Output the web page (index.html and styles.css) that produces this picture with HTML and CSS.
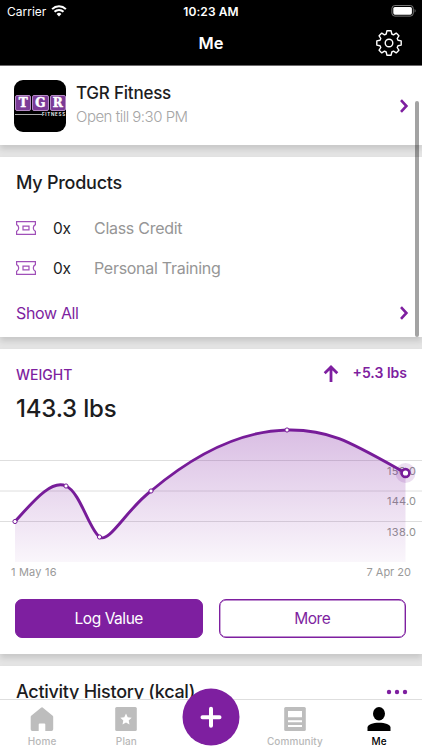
FILE: index.html
```html
<!DOCTYPE html>
<html lang="en">
<head>
<meta charset="utf-8">
<title>Me</title>
<link rel="stylesheet" href="styles.css">
</head>
<body>
<div class="phone">
  <header class="top">
    <div class="status">
      <div class="carrier"><span class="t-carrier">Carrier</span>
        <svg width="16" height="12" viewBox="0 0 16 12"><path d="M8 11.4 5.6 8.9a3.5 3.5 0 0 1 4.8 0z" fill="#fff"/><path d="M3.5 6.8a6.4 6.4 0 0 1 9 0M1.1 4.1a9.9 9.9 0 0 1 13.8 0" fill="none" stroke="#fff" stroke-width="2"/></svg>
      </div>
      <span class="t-clock">10:23 AM</span>
      <svg class="battery" width="26" height="12" viewBox="0 0 26 12"><rect x=".9" y=".5" width="21.4" height="10.6" rx="3" fill="none" stroke="#777"/><rect x="2.3" y="1.9" width="18.6" height="7.8" rx="1.6" fill="#fff"/><path d="M23.6 4v3.6c1.3-.5 1.3-3.1 0-3.6z" fill="#777"/></svg>
    </div>
    <div class="nav">
      <h1 class="t-title">Me</h1>
      <svg class="gear" width="28" height="28" viewBox="-14 -14 28 28" fill="none" stroke="#fff" stroke-width="1.4" stroke-linejoin="round"><path d="M-2.8-9-2.1-12.2H2.1L2.8-9 4.5-8.2 7.2-9.9 9.9-7.2 8.2-4.5 9-2.8 12.2-2.1V2.1L9 2.8 8.2 4.5 9.9 7.2 7.2 9.9 4.5 8.2 2.8 9 2.1 12.2H-2.1L-2.8 9-4.5 8.2-7.2 9.9-9.9 7.2-8.2 4.5-9 2.8-12.2 2.1V-2.1L-9-2.8-8.2-4.5-9.9-7.2-7.2-9.9-4.5-8.2z"/><circle r="3.8"/></svg>
    </div>
  </header>

  <main class="feed">
    <section class="card club">
      <div class="logo">
        <div class="tiles"><b>T</b><b>G</b><b>R</b></div>
        <div class="tag"><i></i><span>FITNESS</span></div>
      </div>
      <div class="club-text">
        <div class="t-club">TGR Fitness</div>
        <div class="t-open">Open till 9:30 PM</div>
      </div>
      <svg class="chev" width="10" height="16" viewBox="0 0 10 16"><path d="M2 2.2 7.4 8 2 13.8"/></svg>
    </section>

    <section class="card products">
      <h2 class="t-h2">My Products</h2>
      <div class="product">
        <svg class="ticket" width="20" height="14" viewBox="0 0 20 14"><path d="M.6.6h18.8v3a3.8 3.8 0 0 0 0 6.8v3H.6v-3a3.8 3.8 0 0 0 0-6.8z"/><path d="M7 5.2h6v3.7H7z"/></svg>
        <span class="t-qty">0x</span><span class="t-item">Class Credit</span>
      </div>
      <div class="product">
        <svg class="ticket" width="20" height="14" viewBox="0 0 20 14"><path d="M.6.6h18.8v3a3.8 3.8 0 0 0 0 6.8v3H.6v-3a3.8 3.8 0 0 0 0-6.8z"/><path d="M7 5.2h6v3.7H7z"/></svg>
        <span class="t-qty">0x</span><span class="t-item">Personal Training</span>
      </div>
      <div class="show-all"><span class="t-show">Show All</span>
        <svg class="chev" width="10" height="16" viewBox="0 0 10 16"><path d="M2 2.2 7.4 8 2 13.8"/></svg>
      </div>
    </section>

    <section class="card weight">
      <div class="weight-head">
        <span class="t-weight">WEIGHT</span>
        <svg class="arrow" width="16" height="18" viewBox="0 0 16 18"><path d="M8 17V2.2M1.7 8.2 8 2l6.3 6.2"/></svg>
        <span class="t-delta">+5.3 lbs</span>
      </div>
      <div class="t-value">143.3 lbs</div>
      <div class="chart">
        <svg width="422" height="142" viewBox="0 421 422 142">
          <defs><linearGradient id="fade" x1="0" y1="430" x2="0" y2="562" gradientUnits="userSpaceOnUse"><stop offset="0" stop-color="#7e1fa0" stop-opacity=".29"/><stop offset="1" stop-color="#7e1fa0" stop-opacity=".04"/></linearGradient></defs>
          <path d="M0 460.5H422M0 491H422M0 521.5H422" stroke="#dedede"/>
          <g class="axis"><text x="387" y="474.5" textLength="29">150.0</text><text x="387" y="505" textLength="29">144.0</text><text x="387" y="535.5" textLength="29">138.0</text></g>
          <path d="M15 521.5C32 503 51 479 66 486C80 492 89 529 99.5 537C109 544 127 509 151 491C196 453 242 431 287 430C330 429 352 443 405.5 473V562H15z" fill="url(#fade)"/>
          <circle cx="405.5" cy="473" r="10" fill="#7e1fa0" opacity=".15"/>
          <path d="M15 521.5C32 503 51 479 66 486C80 492 89 529 99.5 537C109 544 127 509 151 491C196 453 242 431 287 430C330 429 352 443 405.5 473" fill="none" stroke="#771c99" stroke-width="2.9"/>
          <g fill="#fff" stroke="#771c99" stroke-width="1"><circle cx="15" cy="521.5" r="2.1"/><circle cx="66" cy="486" r="2.1"/><circle cx="99.5" cy="537" r="2.1"/><circle cx="151" cy="491" r="2.1"/><circle cx="287" cy="430" r="2.1"/></g>
          <circle cx="405.5" cy="473" r="3.9" fill="#fff" stroke="#771c99" stroke-width="2.6"/>
        </svg>
      </div>
      <div class="dates"><span class="t-d1">1 May 16</span><span>7 Apr 20</span></div>
      <div class="buttons"><button class="solid">Log Value</button><button class="line">More</button></div>
    </section>

    <section class="card activity">
      <h2 class="t-act">Activity History (kcal)</h2>
      <svg width="22" height="6" viewBox="0 0 22 6" fill="#7e1fa0"><circle cx="3" cy="3" r="2.2"/><circle cx="11" cy="3" r="2.2"/><circle cx="19" cy="3" r="2.2"/></svg>
    </section>
  </main>

  <nav class="tabs">
    <div class="tab"><svg width="24" height="24" viewBox="0 0 24 24"><path d="M12 0 22.7 8.7Q23.2 9.1 23.2 10V22.3Q23.2 24 21.5 24H15.3V17.5Q15.3 16.5 14.3 16.5H9.7Q8.7 16.5 8.7 17.5V24H2.3Q.7 24 .7 22.3V10Q.7 9.1 1.2 8.7L11 .7Q12 0 13 .7z" fill="#bdbdbd"/></svg><span>Home</span></div>
    <div class="tab"><svg width="24" height="24" viewBox="0 0 24 24"><rect x="1.2" width="21.6" height="24" rx="1.5" fill="#bdbdbd"/><path d="m12 6.6 1.7 3.7 4 .5-3 2.7.8 4-3.5-2-3.5 2 .8-4-3-2.7 4-.5z" fill="#fff"/></svg><span>Plan</span></div>
    <div class="tab"></div>
    <div class="tab"><svg width="24" height="24" viewBox="0 0 24 24"><rect x="1.2" width="21.6" height="24" rx="1.5" fill="#bdbdbd"/><path d="M5 4h14v6.3H5zM5 13.2h14v2H5zM5 18h14v2H5z" fill="#fff"/></svg><span>Community</span></div>
    <div class="tab active"><svg width="24" height="24" viewBox="0 0 24 24"><ellipse cx="12" cy="6.7" rx="6" ry="6.7"/><path d="M.5 24v-3.5C.5 17.5 6 15.7 12 15.7s11.5 1.8 11.5 4.8V24z"/></svg><span>Me</span></div>
  </nav>
  <div class="fab"><svg width="58" height="58" viewBox="0 0 58 58"><circle cx="29" cy="29" r="28.5" fill="#7e1fa0"/><path d="M29 20.7v17M20.5 29.2h17" stroke="#fff" stroke-width="4" stroke-linecap="round"/></svg></div>
  <div class="scrollbar"></div>
</div>
</body>
</html>
```
FILE: styles.css
```css
* { box-sizing: border-box; }
body { margin: 0; font-family: Inter, "Liberation Sans", sans-serif; color: #1c1c1e; }
h1, h2 { margin: 0; }
svg { display: block; flex: none; }
span, h1, h2, .club-text div, .t-value { white-space: nowrap; }
.phone { position: relative; width: 422px; height: 750px; overflow: hidden; background: #e4e4e4; display: flex; flex-direction: column; }

.top { height: 66px; flex: none; background: #000; color: #fff; border-bottom: 1px solid #6c6a6c; }
.status { height: 22px; display: grid; grid-template-columns: 1fr auto 1fr; align-items: center; padding: 0 5px 0 7px; }
.carrier { display: flex; align-items: center; gap: 5px; }
.t-carrier { font-size: 12px; }
.t-clock { font-size: 12px; font-weight: 600; letter-spacing: .1px; margin-right: 2px; }
.battery { justify-self: end; }
.nav { height: 43px; display: grid; grid-template-columns: 1fr auto 1fr; align-items: center; padding: 0 19.5px; }
.t-title { grid-column: 2; font-size: 16.5px; font-weight: 600; line-height: 20px; margin-top: -2px; }
.gear { justify-self: end; margin-top: -2px; }

.feed { flex: 1; min-height: 0; overflow: hidden; display: flex; flex-direction: column; gap: 12px; }
.card { flex: none; background: #fff; box-shadow: 0 4px 6px rgba(0,0,0,.13); }
.club { height: 79px; display: flex; align-items: center; padding: 0 14px; }
.logo { width: 52px; height: 52px; border-radius: 9px; background: #000; overflow: hidden; padding: 15px 0 0 1px; margin-top: 1px; }
.tiles { display: flex; gap: 1px; }
.tiles b { width: 16.4px; height: 16.4px; border: 1px solid #b58bc5; border-radius: 2px; background: #7b3b97; color: #fff; font: 700 12px/14px "DejaVu Serif", serif; text-align: center; -webkit-text-stroke: .5px #fff; }
.tag { display: flex; align-items: center; margin-top: 1px; }
.tag i { width: 27px; height: 1px; background: #aaa; }
.tag span { font-size: 4.5px; line-height: 5px; font-weight: 600; letter-spacing: .7px; color: #fff; }
.club-text { margin-left: 10px; flex: 1; }
.t-club { font-size: 17px; font-weight: 500; line-height: 24px; letter-spacing: -.22px; margin-top: -2px; }
.t-open { font-size: 15px; line-height: 24px; color: #a6a6a6; font-weight: 300; letter-spacing: -.5px; }
.chev { margin-right: .5px; }
.chev path { fill: none; stroke: #7e1fa0; stroke-width: 2.6; }
.club .chev { margin-right: -.5px; }

.products { height: 180px; padding: 14px 13px 0 16px; }
.t-h2 { font-size: 18px; font-weight: 500; line-height: 24px; margin-bottom: 13px; letter-spacing: -.25px; }
.product { height: 40px; display: flex; align-items: center; }
.ticket path { fill: none; stroke: #a04fb8; stroke-width: 1.2; }
.t-qty { font-size: 15.5px; width: 41px; margin-left: 17px; letter-spacing: -.4px; }
.t-item { font-size: 16px; color: #969696; letter-spacing: -.28px; }
.show-all { height: 46px; padding-top: 4px; display: flex; align-items: center; justify-content: space-between; }
.t-show { font-size: 16px; color: #7e1fa0; letter-spacing: -.35px; }

.weight { height: 305px; }
.weight-head { height: 46px; padding: 4px 15px 0 16px; display: flex; align-items: center; color: #7e1fa0; }
.t-weight { font-size: 14px; font-weight: 500; flex: 1; }
.arrow { margin-right: 13px; }
.arrow path { fill: none; stroke: #7e1fa0; stroke-width: 2.8; }
.t-delta { font-size: 14px; font-weight: 600; margin-top: -4px; }
.t-value { height: 26px; line-height: 27px; font-size: 24px; font-weight: 500; padding-left: 16px; letter-spacing: -.2px; }
.axis { font-size: 11px; fill: #919191; }
.dates { height: 19px; display: flex; justify-content: space-between; align-items: center; padding: 0 11px 1px; font-size: 11px; color: #9a9a9a; }
.t-d1 { letter-spacing: .2px; }
.buttons { display: grid; grid-template-columns: 1fr 1fr; gap: 16px; padding: 17px 16px 0 15px; }
.buttons button { height: 39px; border-radius: 7px; border: 1.5px solid #7e1fa0; font: 400 15.5px Inter, sans-serif; letter-spacing: -.45px; padding: 0 0 1px; box-shadow: inset 0 0 0 .4px #7e1fa0; }
.solid { background: #7e1fa0; color: #fff; }
.line { background: #fff; color: #7e1fa0; }
.activity { height: 100px; display: flex; justify-content: space-between; padding: 14px 14.5px 0 16px; }
.activity svg { margin-top: 9px; }
.t-act { font-size: 18px; font-weight: 500; line-height: 24px; letter-spacing: -.28px; }

.tabs { height: 51px; flex: none; background: #fff; border-top: 1px solid #dedede; display: grid; grid-template-columns: repeat(5, 84.25px); }
.tab { display: flex; flex-direction: column; align-items: center; padding-top: 7px; font-size: 10px; color: #b8b8b8; font-weight: 500; letter-spacing: .1px; }
.tab span { line-height: 14px; margin-top: 3px; }
.tab.active { color: #000; }
.fab { position: absolute; left: 182px; top: 688px; }
.scrollbar { position: absolute; left: 415px; top: 101px; width: 3.5px; height: 236px; border-radius: 2px; background: rgba(0,0,0,.36); }
```
